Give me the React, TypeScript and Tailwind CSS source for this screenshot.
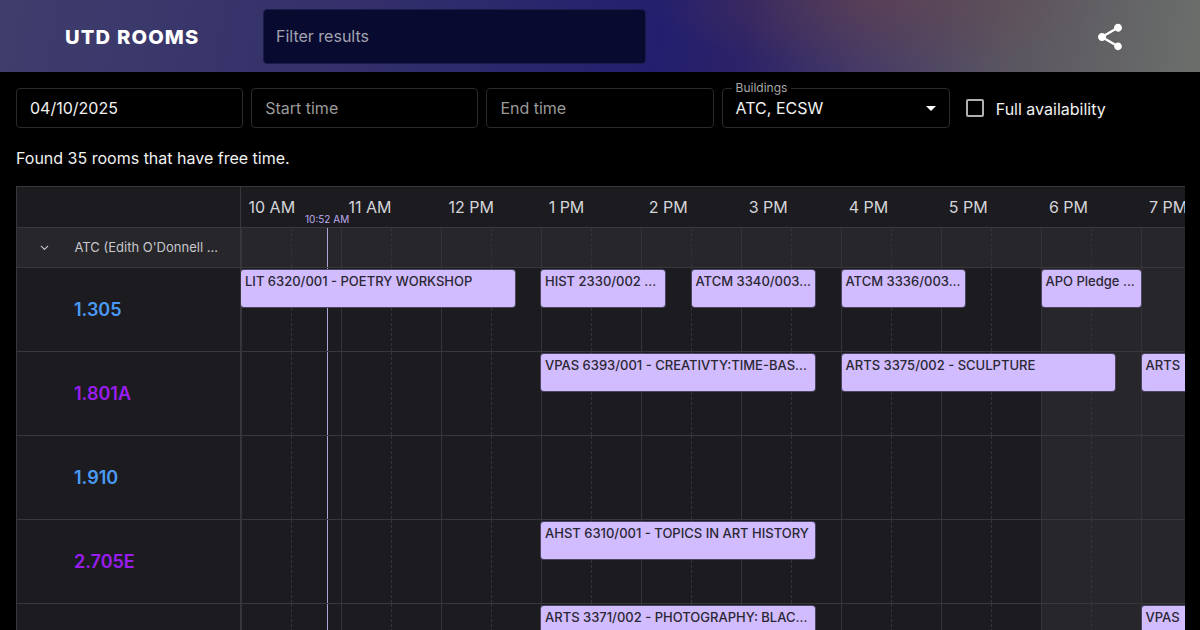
const hours = ['10 AM','11 AM','12 PM','1 PM','2 PM','3 PM','4 PM','5 PM','6 PM','7 PM'];
const slots = Array.from({ length: 19 }, (_, i) => i);

type Ev = { t: string; l: number; w: number };
const rows: { name: string; purple: boolean; ev: Ev[] }[] = [
  { name: '1.305', purple: false, ev: [
    { t: 'LIT 6320/001 - POETRY WORKSHOP', l: 0, w: 274 },
    { t: 'HIST 2330/002 ...', l: 300, w: 124 },
    { t: 'ATCM 3340/003...', l: 450.5, w: 123.5 },
    { t: 'ATCM 3336/003...', l: 600.5, w: 123.5 },
    { t: 'APO Pledge ...', l: 800.5, w: 99 },
  ] },
  { name: '1.801A', purple: true, ev: [
    { t: 'VPAS 6393/001 - CREATIVTY:TIME-BAS...', l: 300, w: 274 },
    { t: 'ARTS 3375/002 - SCULPTURE', l: 600.5, w: 273.5 },
    { t: 'ARTS', l: 900.5, w: 120 },
  ] },
  { name: '1.910', purple: false, ev: [] },
  { name: '2.705E', purple: true, ev: [
    { t: 'AHST 6310/001 - TOPICS IN ART HISTORY', l: 300, w: 274 },
  ] },
  { name: '', purple: false, ev: [
    { t: 'ARTS 3371/002 - PHOTOGRAPHY: BLAC...', l: 300, w: 274 },
    { t: 'VPAS', l: 900.5, w: 120 },
  ] },
];

function Grid() {
  return (
    <div className="absolute inset-0 flex w-[951px]">
      {slots.map((i) => (
        <div
          key={i}
          className={`w-[50.03px] shrink-0 border-l ${i % 2 === 0 ? 'border-solid border-[#333338]' : 'border-dashed border-[#333338]'}`}
        />
      ))}
    </div>
  );
}

function Field({ value, placeholder }: { value?: string; placeholder?: string }) {
  return (
    <div className={`flex h-10 w-[227.2px] shrink-0 items-center rounded border border-[#2a2a2a] px-[13px] text-base ${value ? 'text-[#f2f2f2]' : 'text-[#9a9a9a]'}`}>
      {value ?? placeholder}
    </div>
  );
}

export default function App() {
  return (
    <div className="h-[630px] w-[1200px] overflow-hidden bg-black font-['Inter','Liberation_Sans',sans-serif] text-white">
      <header className="flex h-[72px] items-center bg-[radial-gradient(ellipse_230px_70px_at_73%_0%,rgba(116,72,66,0.42),transparent),linear-gradient(100deg,#403d6c_0%,#33306b_30%,#231f6e_55%,#2c2268_62%,#453a66_72%,#5a5560_84%,#6b6f6b_100%)]">
        <div className="w-[263px] pt-[3px] pl-[65px]">
          <span className="block origin-left scale-x-[1.06] text-[19px] leading-none font-extrabold tracking-[1.1px] text-white">UTD ROOMS</span>
        </div>
        <div className="flex h-[55px] w-[383px] items-center rounded border border-[#1c1c4a] bg-[#080a30] px-[12px] text-base text-[#a3a3b0]">Filter results</div>
        <div className="mt-[2px] ml-[448px]">
          <svg viewBox="0 0 24 24" width="32" height="32" fill="#ffffff" className="block">
            <path d="M18 16.08c-.76 0-1.44.3-1.96.77L8.91 12.7c.05-.23.09-.46.09-.7s-.04-.47-.09-.7l7.05-4.11c.54.5 1.25.81 2.04.81 1.66 0 3-1.34 3-3s-1.34-3-3-3-3 1.34-3 3c0 .24.04.47.09.7L8.04 9.81C7.5 9.31 6.79 9 6 9c-1.66 0-3 1.34-3 3s1.34 3 3 3c.79 0 1.5-.31 2.04-.81l7.12 4.16c-.05.21-.08.43-.08.65 0 1.61 1.31 2.92 2.92 2.92s2.92-1.31 2.92-2.92-1.31-2.92-2.92-2.92z" />
          </svg>
        </div>
      </header>

      <div className="flex items-center gap-2 px-4 pt-4">
        <Field value="04/10/2025" />
        <Field placeholder="Start time" />
        <Field placeholder="End time" />
        <div className="relative flex h-10 w-[228.2px] shrink-0 items-center justify-between rounded border border-[#2a2a2a] px-[13px] text-base text-[#f2f2f2]">
          <span className="absolute -top-[8px] left-[9px] bg-black px-[4px] text-xs leading-[14px] text-[#a8a8a8]">Buildings</span>
          <span>ATC, ECSW</span>
          <span className="h-0 w-0 border-x-[5px] border-t-[5px] border-x-transparent border-t-white" />
        </div>
        <div className="ml-2 flex items-center gap-3">
          <span className="h-[18px] w-[18px] rounded-[2px] border-2 border-[#b0b0b0]" />
          <span className="pt-px text-base text-[#f2f2f2]">Full availability</span>
        </div>
      </div>

      <p className="mt-5 pl-4 text-base leading-5 text-[#f2f2f2]">Found 35 rooms that have free time.</p>

      <div className="mt-[18px] ml-4 w-[1168.5px] overflow-hidden border-t border-l border-[#38383c] bg-[#1c1c20]">
        <div className="flex h-[41px] border-b border-[#38383c]">
          <div className="w-[224px] shrink-0 border-r border-[#38383c]" />
          <div className="relative flex flex-1">
            {hours.map((h) => (
              <div key={h} className="w-[100.05px] shrink-0 pt-[10px] pl-[7.5px] text-base leading-5 text-[#d4d4d8]">{h}</div>
            ))}
            <span className="absolute top-[26px] left-[64px] text-[10px] leading-3 text-[#bcaaee]">10:52 AM</span>
          </div>
        </div>

        <div className="flex h-10 border-b border-[#38383c] bg-[#26262b]">
          <div className="flex w-[224px] shrink-0 items-center border-r border-[#38383c] text-[13px] text-[#c8c8cc]">
            <svg viewBox="0 0 10 6" width="9" height="5.4" fill="none" stroke="#c8c8cc" strokeWidth="1.2" className="ml-[23px]">
              <path d="M1 1l4 4 4-4" />
            </svg>
            <span className="ml-[25.5px]">ATC (Edith O'Donnell ...</span>
          </div>
          <div className="relative flex-1">
            <Grid />
            <div className="absolute top-0 bottom-0 left-[86px] w-px bg-[#aaa6d8]" />
          </div>
        </div>

        {rows.map((r, idx) => (
          <div key={idx} className="flex h-[84px] border-b border-[#38383c]">
            <div className={`flex w-[224px] shrink-0 items-center border-r border-[#38383c] pl-[57px] text-[18px] font-semibold ${r.purple ? 'text-[#9a1df0]' : 'text-[#4a9af5]'}`}>
              {r.name}
            </div>
            <div className="relative flex-1 overflow-hidden">
              <div className="absolute inset-y-0 left-[800px] w-[150px] bg-[#27272b]" />
              <Grid />
              <div className="absolute top-0 bottom-0 left-[86px] w-px bg-[#aaa6d8]" />
              {r.ev.map((e) => (
                <div
                  key={e.t}
                  className="absolute top-[2px] h-[37px] overflow-hidden rounded-[3px] bg-[#d0bcff] px-[4px] pt-[2px] text-[13px] leading-[18px] font-medium whitespace-nowrap text-[#2b2733] shadow-[0_0_0_1px_#4a4560]"
                  style={{ left: e.l, width: e.w }}
                >
                  {e.t}
                </div>
              ))}
            </div>
          </div>
        ))}
      </div>
    </div>
  );
}
